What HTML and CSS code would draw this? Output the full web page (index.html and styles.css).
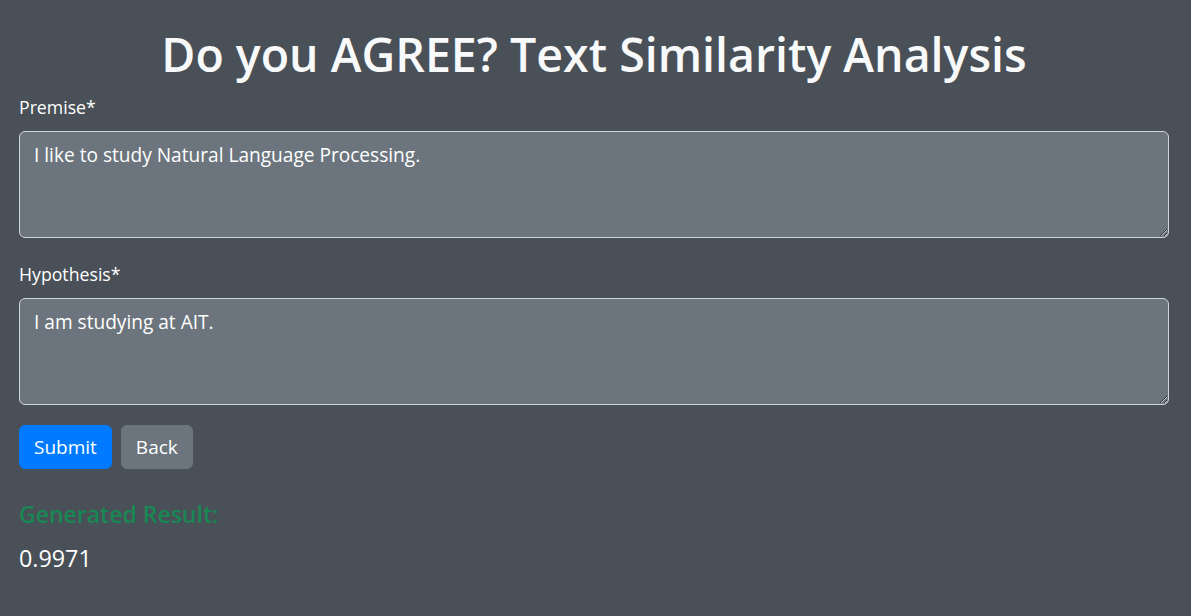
FILE: index.html
```html
<!DOCTYPE html>
<html lang="en">
<head>
<meta charset="utf-8">
<title>Do you AGREE?</title>
<link rel="stylesheet" href="styles.css">
</head>
<body>
<div class="container">
  <h1 class="title">Do you AGREE? Text Similarity Analysis</h1>
  <form class="form">
    <label class="label" for="premise">Premise*</label>
    <textarea id="premise" class="field">I like to study Natural Language Processing.</textarea>
    <label class="label" for="hypo">Hypothesis*</label>
    <textarea id="hypo" class="field">I am studying at AIT.</textarea>
    <div class="actions">
      <button type="button" class="btn btn-primary">Submit</button>
      <button type="button" class="btn btn-secondary">Back</button>
    </div>
  </form>
  <h5 class="result-title">Generated Result:</h5>
  <p class="result">0.9971</p>
</div>
</body>
</html>
```
FILE: styles.css
```css
* { box-sizing: border-box; }
html, body { margin: 0; height: 100%; }
body {
  background: #495057;
  color: #fff;
  font-family: "Open Sans", "Noto Sans", sans-serif;
  font-size: 18px;
  line-height: 1.5;
}
.container {
  padding: 0 22px 0 19px;
}
.title {
  margin: 0;
  padding-top: 27px;
  text-align: center;
  font-size: 46.5px;
  font-weight: 600;
  line-height: 55px;
  color: #f8f9fa;
}
.form {
  display: flex;
  flex-direction: column;
}
.label {
  margin-top: 11.5px;
  margin-bottom: 10.5px;
  font-size: 17.7px;
  line-height: 27px;
  color: #fff;
}
.field {
  display: block;
  width: 100%;
  height: 107px;
  padding: 9.4px 14px;
  background: #6c757d;
  color: #fff;
  border: 1px solid #ced4da;
  border-radius: 6px;
  font: inherit;
  font-size: 19.1px;
  line-height: 28.5px;
  resize: vertical;
}
.field + .label { margin-top: 22.5px; }
.actions {
  display: flex;
  gap: 9px;
  margin-top: 20px;
}
.btn {
  height: 44px;
  padding: 0 14px;
  border: 1px solid transparent;
  border-radius: 6px;
  color: #fff;
  font: inherit;
  font-size: 19px;
  line-height: 42px;
  cursor: pointer;
}
.btn-primary { background: #007bff; border-color: #007bff; }
.btn-secondary { background: #6c757d; border-color: #6c757d; }
.result-title {
  margin: 32.3px 0 0;
  font-size: 23px;
  font-weight: 600;
  line-height: 1.2;
  color: #198754;
}
.result {
  margin: 11.7px 0 0;
  font-size: 23.3px;
  line-height: 1.5;
}
```
